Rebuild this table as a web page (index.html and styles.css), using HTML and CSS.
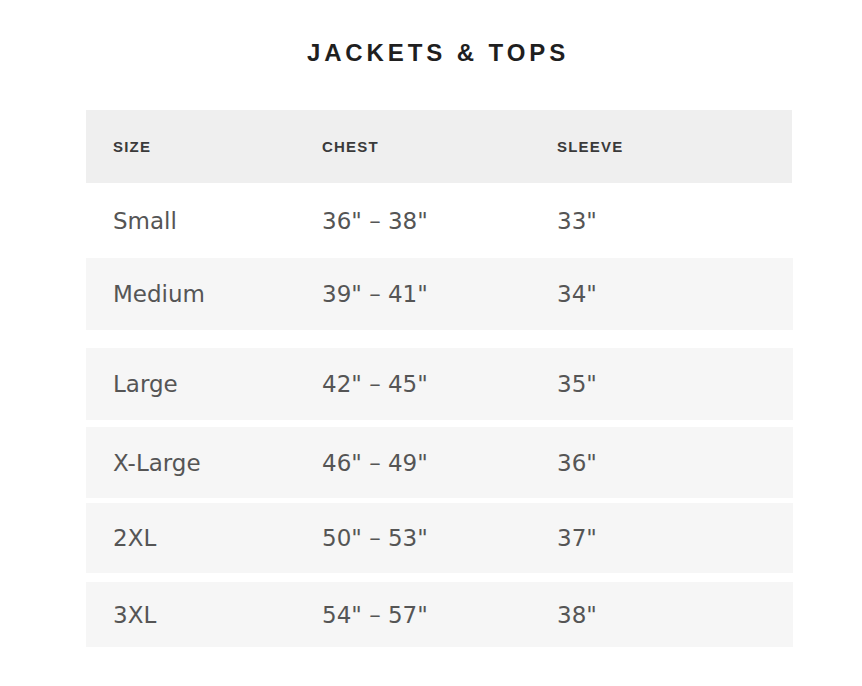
FILE: index.html
```html
<!DOCTYPE html>
<html>
<head>
<meta charset="utf-8">
<link rel="stylesheet" href="styles.css">
</head>
<body>
<main class="page">
  <h1 class="title">JACKETS &amp; TOPS</h1>
  <div class="chart">
    <div class="row head"><span>SIZE</span><span>CHEST</span><span>SLEEVE</span></div>
    <div class="row r-small"><span>Small</span><span>36" – 38"</span><span>33"</span></div>
    <div class="row shaded r-medium"><span>Medium</span><span>39" – 41"</span><span>34"</span></div>
    <div class="row shaded r-large"><span>Large</span><span>42" – 45"</span><span>35"</span></div>
    <div class="row shaded r-xl"><span>X-Large</span><span>46" – 49"</span><span>36"</span></div>
    <div class="row shaded r-2xl"><span>2XL</span><span>50" – 53"</span><span>37"</span></div>
    <div class="row shaded r-3xl"><span>3XL</span><span>54" – 57"</span><span>38"</span></div>
  </div>
</main>
</body>
</html>
```
FILE: styles.css
```css
html, body {
  margin: 0;
  padding: 0;
  background: #ffffff;
}
.page {
  width: 862px;
  height: 686px;
  overflow: hidden;
}
.title {
  margin: 0;
  padding-top: 38px;
  padding-left: 14px;
  line-height: 30px;
  text-align: center;
  font-family: "Liberation Sans", Arial, sans-serif;
  font-weight: 700;
  font-size: 24px;
  letter-spacing: 3.9px;
  color: #1f1f1f;
}
.chart {
  margin-top: 42px;
  margin-left: 86px;
  width: 706px;
  display: flex;
  flex-direction: column;
}
.row {
  display: grid;
  grid-template-columns: 209px 235px 1fr;
  align-items: center;
  padding-left: 27px;
  height: 72px;
  font-family: "DejaVu Sans", "Liberation Sans", sans-serif;
  font-size: 23px;
  color: #555555;
}
.row.head {
  height: 73px;
  background: #efefef;
  font-family: "Liberation Sans", Arial, sans-serif;
  font-weight: 700;
  font-size: 15px;
  letter-spacing: 1.2px;
  color: #3a3a3a;
}
.row.shaded {
  background: #f6f6f6;
  width: 680px;
}
.r-small { height: 75px; }
.r-medium { height: 72px; }
.r-large { margin-top: 18px; height: 72px; }
.r-xl { margin-top: 7px; height: 71px; }
.r-2xl { margin-top: 5px; height: 70px; }
.r-3xl { margin-top: 9px; height: 65px; }
```
